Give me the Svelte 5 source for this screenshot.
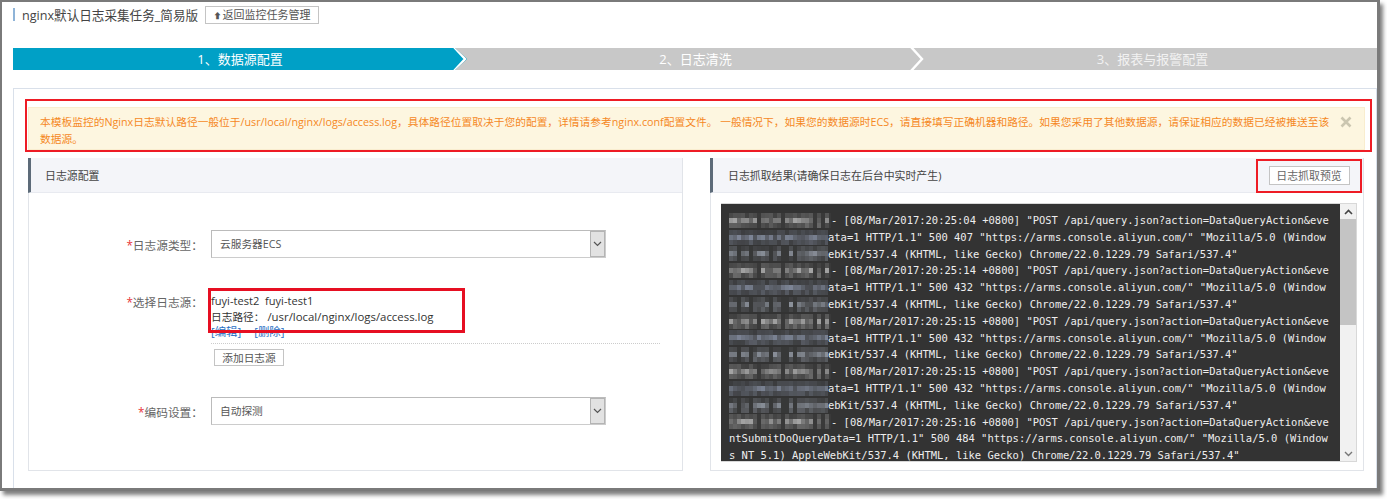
<script>
  const entries = [
    { time: '04', size: '407' },
    { time: '14', size: '432' },
    { time: '15', size: '432' },
    { time: '15', size: '432' },
    { time: '16', size: '484' },
  ];

  // log lines, the client part at the start of a line is masked in the screenshot
  const lines = [];
  entries.forEach((e, i) => {
    const last = i === entries.length - 1;
    lines.push({ mask: 'addr', seed: i, text: `- [08/Mar/2017:20:25:${e.time} +0800] "POST /api/query.json?action=DataQueryAction&eve` });
    if (last) {
      lines.push({ text: `ntSubmitDoQueryData=1 HTTP/1.1" 500 ${e.size} "https://arms.console.aliyun.com/" "Mozilla/5.0 (Window` });
      lines.push({ text: `s NT 5.1) AppleWebKit/537.4 (KHTML, like Gecko) Chrome/22.0.1229.79 Safari/537.4"` });
    } else {
      lines.push({ mask: 'query', seed: i, text: `ata=1 HTTP/1.1" 500 ${e.size} "https://arms.console.aliyun.com/" "Mozilla/5.0 (Window` });
      lines.push({ mask: 'agent', seed: i, text: `ebKit/537.4 (KHTML, like Gecko) Chrome/22.0.1229.79 Safari/537.4"` });
    }
  });

  const masks = {
    addr: { on: '11111110111110111111101010', tint: [165, 165, 165] },
    query: { on: '11111111111111111111111111', tint: [125, 133, 150] },
    agent: { on: '11011011110110010111111111', tint: [140, 146, 156] },
  };
  const rowWeight = [0.3, 0.9, 0.45];

  function cells(type, seed) {
    const m = masks[type];
    const out = [];
    for (let r = 0; r < 3; r++) {
      for (let c = 0; c < m.on.length; c++) {
        const h = Math.sin(c * 12.9898 + r * 78.233 + type.length * 4.1 + seed * 0.4) * 43758.5453;
        const noise = h - Math.floor(h);
        const k = m.on[c] === '1' ? rowWeight[r] * (0.35 + noise * 0.75) : 0.05;
        const [a, b, d] = m.tint;
        const mix = (v) => Math.round(51 + (v - 51) * k);
        out.push(`rgb(${mix(a)},${mix(b)},${mix(d)})`);
      }
    }
    return out;
  }
</script>

<div class="page">
  <div class="window">
    <header class="top">
      <span class="mark"></span>
      <h1>nginx默认日志采集任务_简易版</h1>
      <button class="btn back"><span class="up">⬆</span>返回监控任务管理</button>
    </header>

    <div class="steps">
      <div class="step active">
        1、数据源配置
        <svg class="chev" width="14" height="22" viewBox="0 0 14 22"><path d="M1 -1 L12 11 L1 23" fill="none" stroke="#fff" stroke-width="2.4" /></svg>
      </div>
      <div class="step second">
        2、日志清洗
        <svg class="chev" width="14" height="22" viewBox="0 0 14 22"><path d="M1 -1 L12 11 L1 23" fill="none" stroke="#fff" stroke-width="2.4" /></svg>
      </div>
      <div class="step third">3、报表与报警配置</div>
    </div>

    <section class="main">
      <div class="callout">
        <div class="alert">
          <p>本模板监控的Nginx日志默认路径一般位于/usr/local/nginx/logs/access.log，具体路径位置取决于您的配置，详情请参考nginx.conf配置文件。 一般情况下，如果您的数据源时ECS，请直接填写正确机器和路径。如果您采用了其他数据源，请保证相应的数据已经被推送至该<br />数据源。</p>
          <svg class="close" width="12" height="12" viewBox="0 0 12 12"><path d="M1.5 1.5 L10.5 10.5 M10.5 1.5 L1.5 10.5" stroke="#cbc6b0" stroke-width="2.6" /></svg>
        </div>
      </div>

      <div class="columns">
        <div class="panel">
          <div class="panel-head"><span>日志源配置</span></div>
          <div class="form">
            <div class="row">
              <label><em>*</em>日志源类型：</label>
              <div class="select"><span>云服务器ECS</span><i class="arrow"><svg width="9" height="6" viewBox="0 0 9 6"><path d="M1 1 L4.5 4.5 L8 1" fill="none" stroke="#555" stroke-width="1.2" /></svg></i></div>
            </div>
            <div class="row source-row">
              <label><em>*</em>选择日志源：</label>
              <div class="source">
                <div class="source-info">
                  <div class="hosts">fuyi-test2&nbsp;&nbsp;fuyi-test1</div>
                  <div><span class="path-label">日志路径：</span> /usr/local/nginx/logs/access.log</div>
                  <div class="links"><a href="#edit">[编辑]</a><a href="#del">[删除]</a></div>
                  <span class="annot"></span>
                </div>
                <button class="btn add">添加日志源</button>
              </div>
            </div>
            <div class="row encode-row">
              <label><em>*</em>编码设置：</label>
              <div class="select"><span>自动探测</span><i class="arrow"><svg width="9" height="6" viewBox="0 0 9 6"><path d="M1 1 L4.5 4.5 L8 1" fill="none" stroke="#555" stroke-width="1.2" /></svg></i></div>
            </div>
          </div>
        </div>

        <div class="panel">
          <div class="panel-head right-head">
            <span>日志抓取结果(请确保日志在后台中实时产生)</span>
            <div class="annot-box"><button class="btn preview">日志抓取预览</button></div>
          </div>
          <div class="log">
            <div class="log-text">
              {#each lines as line}
                <div class="line">
                  {#if line.mask}
                    <span class="mask {line.mask}">
                      {#each cells(line.mask, line.seed) as color}
                        <b style="background:{color}"></b>
                      {/each}
                    </span>
                  {/if}
                  <span>{line.text}</span>
                </div>
              {/each}
            </div>
            <div class="scrollbar">
              <span class="sb-btn"><svg width="9" height="6" viewBox="0 0 9 6"><path d="M1 5 L4.5 1.5 L8 5" fill="none" stroke="#444" stroke-width="1.6" /></svg></span>
              <span class="thumb"></span>
              <span class="sb-btn end"><svg width="9" height="6" viewBox="0 0 9 6"><path d="M1 1 L4.5 4.5 L8 1" fill="none" stroke="#777" stroke-width="1.4" /></svg></span>
            </div>
          </div>
        </div>
      </div>
    </section>
  </div>
</div>

<style>
  :global(body) {
    background: #fff;
  }

  .page {
    width: 1387px;
    height: 499px;
    overflow: hidden;
  }

  .window {
    box-sizing: border-box;
    width: 1380px;
    height: 491px;
    border: solid #7a7a7a;
    border-width: 2px 3px 3px 2px;
    box-shadow: 3px 4px 4px rgba(0, 0, 0, 0.5);
    background: #fff;
    font-family: "Open Sans", "Noto Sans CJK SC", sans-serif;
    font-size: 10.7px;
    color: #444;
    overflow: hidden;
  }

  .top {
    display: flex;
    align-items: center;
    height: 17px;
    padding: 4px 0 0 11px;
  }

  .mark {
    width: 2px;
    height: 13px;
    background: #8fb4d8;
  }

  h1 {
    margin: 0 7px;
    font-size: 12.6px;
    font-weight: 400;
    color: #444;
    white-space: nowrap;
  }

  .btn {
    box-sizing: border-box;
    padding: 0;
    border: 1px solid #c4c4c4;
    background: #fff;
    font: inherit;
    color: #555;
    white-space: nowrap;
  }

  .back {
    height: 18px;
    width: 114px;
    line-height: 15px;
    font-size: 11px;
  }

  .up {
    font-size: 8px;
    margin-right: 1px;
  }

  .steps {
    display: flex;
    margin: 25px 0 0 11px;
    height: 22px;
    background: #c8c8c8;
    color: #fff;
    font-size: 13px;
    line-height: 22px;
    text-align: center;
  }

  .step {
    position: relative;
  }

  .active {
    width: 454px;
    background: #00a0c6;
    clip-path: polygon(0 0, 442px 0, 454px 50%, 442px 100%, 0 100%);
  }

  .second {
    width: 457px;
  }

  .third {
    flex: 1;
    padding-left: 4px;
    color: #f2f2f2;
  }

  .chev {
    position: absolute;
    right: 0;
    top: 0;
  }

  .main {
    box-sizing: border-box;
    height: 420px;
    margin: 18px 0 0 11px;
    padding: 10px 0 0 11px;
    border: 1px solid #d9e0ea;
    border-bottom: 0;
  }

  .callout {
    box-sizing: border-box;
    width: 1347px;
    height: 53px;
    padding: 6px 5px 0 1px;
    border: 2px solid #ee1c25;
  }

  .alert {
    box-sizing: border-box;
    display: flex;
    height: 43px;
    padding: 6px 12px 0 11px;
    border: 1px solid #f9edcf;
    background: #fdf6e0;
    color: #f5881f;
    line-height: 17px;
  }

  .alert p {
    flex: 1;
    margin: 0;
    font-size: 10.74px;
    white-space: nowrap;
  }

  .close {
    flex: none;
    margin-top: 2px;
  }

  .columns {
    display: flex;
    gap: 27px;
    margin: 6px 0 0 3px;
  }

  .panel {
    box-sizing: border-box;
    width: 655px;
    height: 313px;
    border: 1px solid #e1e4e9;
    border-top: 0;
  }

  .panel + .panel {
    width: 654px;
  }

  .panel-head {
    box-sizing: border-box;
    display: flex;
    align-items: center;
    justify-content: space-between;
    height: 35px;
    margin-left: -1px;
    padding-left: 14px;
    border-left: 3px solid #5d6b79;
    border-bottom: 1px solid #e8eaf0;
    background: #f4f5f9;
    color: #444;
    font-size: 10.9px;
  }

  .right-head {
    padding-left: 15px;
    padding-right: 1px;
  }

  .annot-box {
    box-sizing: border-box;
    display: flex;
    align-items: center;
    justify-content: center;
    width: 106px;
    height: 34px;
    margin-top: 2px;
    border: 2px solid #ee1c25;
  }

  .preview {
    width: 81px;
    height: 19px;
    margin-top: -2px;
    color: #666;
  }

  .form {
    padding-top: 37px;
  }

  .row {
    display: flex;
    align-items: center;
  }

  .row label {
    flex: none;
    width: 174px;
    margin-right: 8px;
    font-size: 11.7px;
    text-align: right;
    color: #666;
  }

  .row em {
    color: #e8343a;
    font-style: normal;
  }

  .select {
    box-sizing: border-box;
    display: flex;
    justify-content: space-between;
    width: 395px;
    height: 28px;
    padding-left: 8px;
    border: 1px solid #ccc;
    border-top-color: #bbb;
    border-left-color: #bbb;
    line-height: 26px;
    color: #555;
  }

  .arrow {
    box-sizing: border-box;
    display: flex;
    align-items: center;
    justify-content: center;
    width: 15px;
    border: 1px solid #b4b4b4;
    background: #e2e2e2;
  }

  .source-row {
    align-items: flex-start;
    margin-top: 35px;
  }

  .source-row label {
    line-height: 18px;
  }

  .source {
    width: 449px;
  }

  .source-info {
    position: relative;
    height: 47px;
    padding-bottom: 3px;
    border-bottom: 1px dotted #ccc;
    font-size: 11.4px;
    line-height: 16px;
    color: #333;
  }

  .hosts {
    font-size: 11.1px;
  }

  .path-label {
    font-size: 10.7px;
  }

  .links {
    display: flex;
    gap: 13px;
    margin-top: -1px;
  }

  .links a {
    color: #2a6fc4;
    text-decoration: none;
  }

  .annot {
    position: absolute;
    left: -3px;
    top: -5px;
    box-sizing: border-box;
    width: 257px;
    height: 45px;
    border: 3px solid #e60f22;
  }

  .add {
    display: block;
    width: 70px;
    height: 17px;
    margin: 5px 0 0 3px;
    line-height: 14px;
  }

  .encode-row {
    margin-top: 31px;
  }

  .log {
    box-sizing: border-box;
    display: flex;
    width: 636px;
    height: 259px;
    margin: 10px 0 0 10px;
    border: 1px solid #d8d8d8;
    border-left: 0;
    background: #333;
    overflow: hidden;
  }

  .log-text {
    flex: 1;
    min-width: 0;
    padding: 8px 0 0 8px;
    color: #eee;
    font-family: "DejaVu Sans Mono", "Liberation Mono", monospace;
    font-size: 10.48px;
    line-height: 16.8px;
    white-space: pre;
  }

  .line {
    display: flex;
    align-items: center;
    height: 16.8px;
  }

  .mask {
    display: grid;
    grid-template-columns: repeat(26, 4px);
    grid-auto-rows: 5px;
    flex: none;
    width: 99px;
    overflow: hidden;
  }

  .mask.addr {
    width: 102px;
  }

  .scrollbar {
    display: flex;
    flex-direction: column;
    flex: none;
    width: 16px;
    background: #f1f1f1;
  }

  .sb-btn {
    display: flex;
    align-items: center;
    justify-content: center;
    height: 15px;
  }

  .thumb {
    height: 106px;
    background: #c4c4c4;
  }

  .end {
    margin-top: auto;
  }
</style>
